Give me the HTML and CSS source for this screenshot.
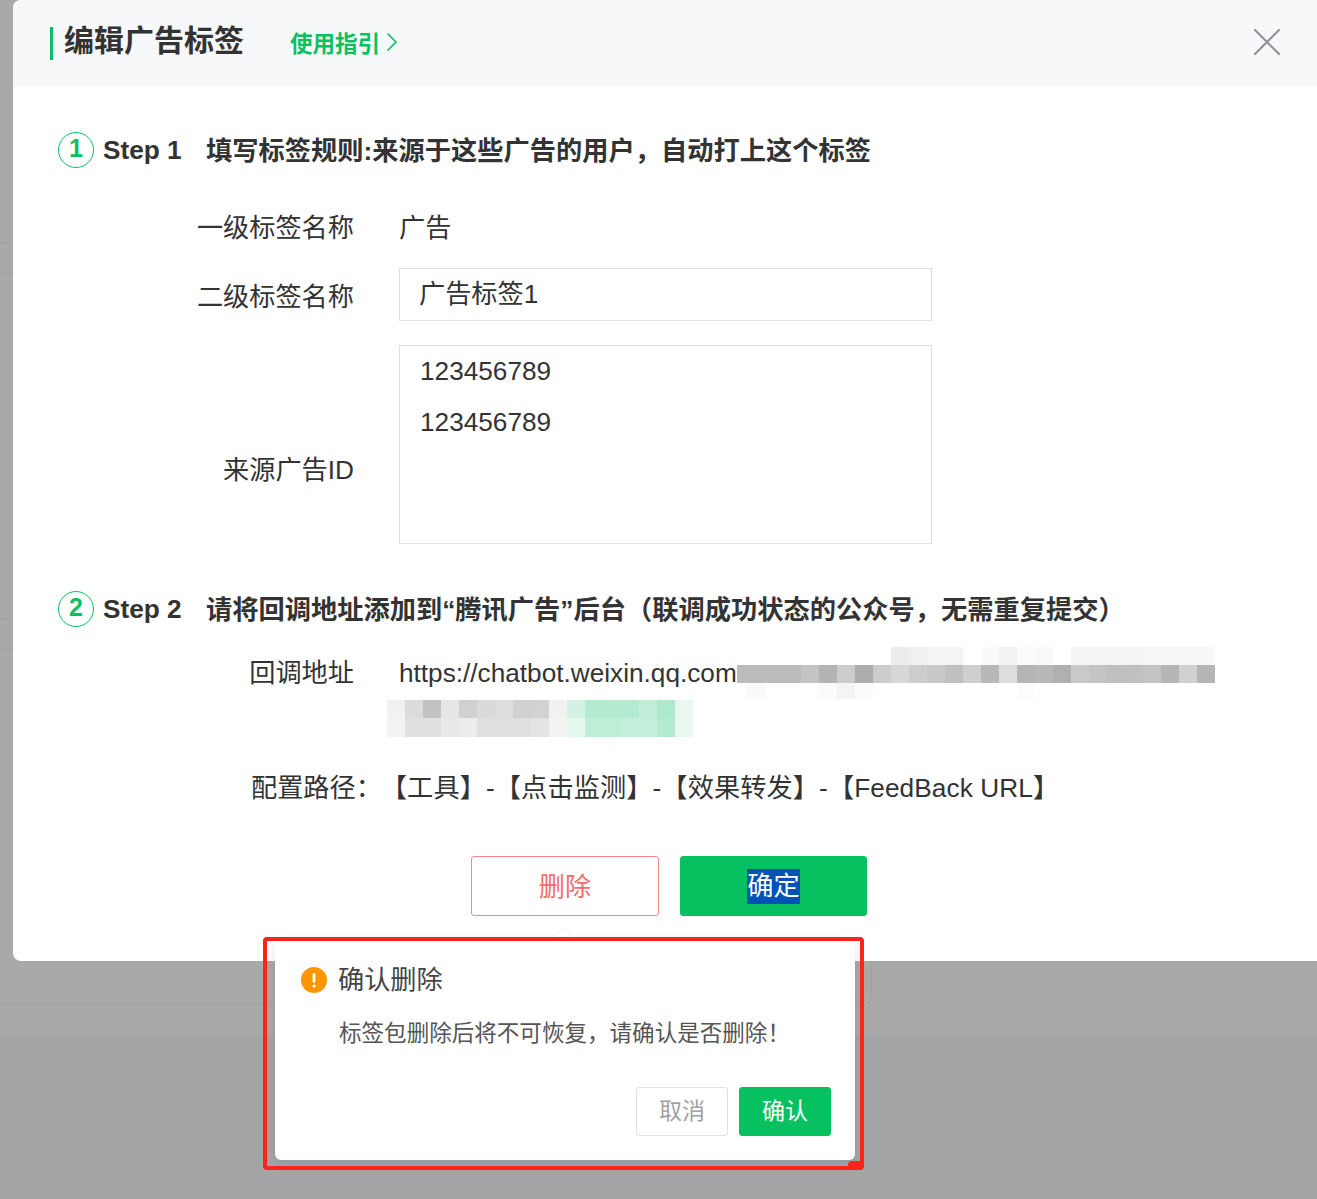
FILE: index.html
```html
<!DOCTYPE html>
<html lang="zh-CN">
<head>
<meta charset="utf-8">
<title>编辑广告标签</title>
<link rel="stylesheet" href="styles.css">
</head>
<body>
<div class="backdrop">
  <div class="bg-card">
    <div class="bg-row bg-row-a"></div>
    <div class="bg-row bg-row-b"></div>
    <div class="bg-row bg-row-c"></div>
    <div class="bg-row bg-row-b"></div>
    <div class="bg-row bg-row-d"></div>
  </div>
  <div class="bg-gap"></div>
</div>

<section class="modal">
  <header class="modal-head">
    <h1 class="modal-title">编辑广告标签</h1>
    <a class="guide">使用指引<svg class="guide-arrow" viewBox="0 0 12 20" width="12" height="20"><path d="M1.5 1.5 10 10l-8.500 8.500" fill="none" stroke="currentColor" stroke-width="1.600"/></svg></a>
    <svg class="close" viewBox="0 0 28 28" width="28" height="28"><path d="M2 2l24 24M26 2 2 26" stroke="#8f9298" stroke-width="2.200" stroke-linecap="round"/></svg>
  </header>

  <div class="modal-body">
    <div class="step step-one">
      <span class="step-num">1</span>
      <span class="step-name">Step 1</span>
      <span class="step-text">填写标签规则:来源于这些广告的用户，自动打上这个标签</span>
    </div>

    <div class="field field-plain">
      <label class="field-label">一级标签名称</label>
      <div class="field-value">广告</div>
    </div>
    <div class="field field-input">
      <label class="field-label">二级标签名称</label>
      <div class="input">广告标签1</div>
    </div>
    <div class="field field-area">
      <label class="field-label">来源广告ID</label>
      <div class="textarea"><div>123456789</div><div>123456789</div></div>
    </div>

    <div class="step step-two">
      <span class="step-num">2</span>
      <span class="step-name">Step 2</span>
      <span class="step-text">请将回调地址添加到“腾讯广告”后台（联调成功状态的公众号，无需重复提交）</span>
    </div>

    <div class="field field-url">
      <label class="field-label">回调地址</label>
      <div class="url">https://chatbot.weixin.qq.com
        <div class="mosaic mosaic-a"></div>
        <div class="mosaic mosaic-b"></div>
      </div>
    </div>

    <div class="path">配置路径：<span class="path-value">【工具】-【点击监测】-【效果转发】-【FeedBack URL】</span></div>

    <div class="actions">
      <button class="btn btn-danger">删除</button>
      <button class="btn btn-primary"><span class="selected">确定</span></button>
    </div>
  </div>
</section>

<aside class="popover">
  <div class="popover-title">
    <svg class="warn" viewBox="0 0 26 26" width="26" height="26"><circle cx="13" cy="13" r="13" fill="#ff9500"/><rect x="11.600" y="6" width="2.800" height="10" rx="1.400" fill="#fff"/><circle cx="13" cy="19" r="1.600" fill="#fff"/></svg>
    <span class="popover-heading">确认删除</span>
  </div>
  <p class="popover-text">标签包删除后将不可恢复，请确认是否删除！</p>
  <div class="popover-actions">
    <button class="mini mini-cancel">取消</button>
    <button class="mini mini-ok">确认</button>
  </div>
</aside>

<div class="red-mark"></div>
<div class="red-dot"></div>
</body>
</html>
```
FILE: styles.css
```css
* { box-sizing: border-box; }
html, body { margin: 0; padding: 0; }
body {
  position: relative;
  width: 1317px;
  height: 1199px;
  overflow: hidden;
  background: #a3a4a6;
  color: #333;
  font-family: "Liberation Sans", "Noto Sans CJK SC", sans-serif;
  font-size: 26.2px;
}

/* dimmed page behind the modal */
.backdrop { background: #a9a9a9; height: 1035px; }
.bg-card {
  width: 872px;
  height: 1005px;
  border-right: 1px solid #9e9fa1;
  border-bottom: 1px solid #9e9fa1;
  border-bottom-right-radius: 8px;
}
.bg-row { border-bottom: 1px solid #9e9fa1; }
.bg-row-a { height: 243px; }
.bg-row-b { height: 31px; }
.bg-row-c { height: 345px; }
.bg-row-d { height: 0; border-bottom: 0; }

/* modal */
.modal {
  position: absolute;
  left: 13px;
  top: 0;
  width: 1304px;
  height: 961px;
  background: #fff;
  border-radius: 8px 0 0 8px;
}
.modal-head {
  position: relative;
  display: flex;
  align-items: center;
  height: 87px;
  padding-left: 37px;
  background: #f7f8fa;
  border-top-left-radius: 8px;
}
.modal-title {
  margin: 0;
  padding-left: 11px;
  height: 33px;
  border-left: 3px solid #07c160;
  font-size: 30px;
  font-weight: 700;
  line-height: 28px;
  color: #333;
}
.guide {
  display: flex;
  align-items: center;
  margin-left: 46px;
  padding-bottom: 4px;
  font-size: 22.500px;
  font-weight: 700;
  color: #07c160;
}
.guide-arrow { margin-left: 6px; }
.close { position: absolute; right: 36px; top: 28px; }

.modal-body { padding: 45px 0 45px 45px; }

.step { display: flex; align-items: center; height: 36px; }
.step-two { margin-top: 47px; }
.step-num {
  flex: none;
  width: 36px;
  height: 36px;
  border: 1px solid #07c160;
  border-radius: 50%;
  color: #07c160;
  font-size: 25px;
  font-weight: 700;
  line-height: 31px;
  text-align: center;
}
.step-name { width: 103px; margin-left: 9px; font-weight: 700; }
.step-text { padding-bottom: 2px; font-size: 26.25px; font-weight: 700; white-space: nowrap; }

.field { display: flex; align-items: center; }
.field-label { flex: none; width: 296px; text-align: right; }
.field-plain { height: 40px; margin-top: 38px; }
.field-plain .field-value { margin-left: 45px; }
.field-input { margin-top: 22px; }
.field-area { margin-top: 24px; }
.field-area .field-label { padding-top: 46px; }
.field-input .input, .field-area .textarea, .url { margin-left: 45px; }
.input {
  width: 533px;
  height: 53px;
  padding-left: 19px;
  border: 1px solid #dcdfe6;
  line-height: 50px;
}
.textarea {
  width: 533px;
  height: 199px;
  padding: 0 20px;
  border: 1px solid #dcdfe6;
  line-height: 51px;
}
.field-url { align-items: flex-start; margin-top: 20px; height: 101px; }
.field-url .field-label { line-height: 52px; }
.url { position: relative; line-height: 52px; white-space: nowrap; }

/* pixelated redaction lying over the callback URL */
.mosaic { position: absolute; background-repeat: no-repeat; }
.mosaic-a {
  left: 338px;
  top: 0;
  width: 478px;
  height: 52px;
  background-image:
    linear-gradient(90deg, transparent 154px, #ececec 154px 172px, #f0f0f0 172px 190px, #f4f4f4 190px 226px, transparent 226px 244px, #fafafa 244px 262px, #f2f2f2 262px 280px, #fbfbfb 280px 298px, #f9f9f9 298px 316px, transparent 316px 334px, #f4f4f4 334px 406px, #f8f8f8 406px 478px),
    linear-gradient(90deg, #bbb 0 64px, #c4c4c4 64px 82px, #b4b4b4 82px 100px, #ccc 100px 118px, #acacac 118px 136px, #ccc 136px 154px, #d8d8d8 154px 172px, #cdcdcd 172px 190px, #c8c8c8 190px 208px, #bfc1c0 208px 226px, #cfcfcf 226px 244px, #b8b8b8 244px 262px, #dcdedd 262px 280px, #b5b5b5 280px 298px, #b8b8b8 298px 316px, #b0b0b0 316px 334px, #cacaca 334px 352px, #c4c4c4 352px 370px, #bec0bf 370px 388px, #c0c0c0 388px 406px, #c4c4c4 406px 424px, #b6b6b6 424px 442px, #d0d2d1 442px 460px, #b5b5b5 460px 478px),
    linear-gradient(90deg, transparent 10px, #fafafa 10px 28px, transparent 28px 82px, #fbfbfb 82px 100px, #f4f4f4 100px 118px, #fbfbfb 118px 136px, transparent 136px 280px, #fdfdfd 280px 298px, transparent 298px);
  background-size: 478px 18px, 478px 18px, 478px 16px;
  background-position: 0 0, 0 18px, 0 36px;
}
.mosaic-b {
  left: -12px;
  top: 53px;
  width: 306px;
  height: 37px;
  background-image:
    linear-gradient(90deg, #f1f1f1 0 18px, #dcdcdc 18px 36px, #c2c2c2 36px 54px, #e6e6e6 54px 72px, #d0d0d0 72px 90px, #dadada 90px 108px, #dcdedd 108px 126px, #d0d2d1 126px 144px, #d2d2d2 144px 162px, #f1f1f1 162px 180px, #d3f2e3 180px 198px, #b3ebcf 198px 216px, #b5ebd0 216px 252px, #c0eed8 252px 270px, #aee9cb 270px 288px, #e8f8f1 288px 306px),
    linear-gradient(90deg, #f3f3f3 0 18px, #dfe1e0 18px 54px, #e8e8e8 54px 72px, #ececec 72px 90px, #dfdfdf 90px 144px, #e4e4e4 144px 162px, #f3f3f3 162px 180px, #e4f8ee 180px 198px, #bdefd6 198px 234px, #c4f0db 234px 270px, #b2ebcf 270px 288px, #e9f9f2 288px 306px);
  background-size: 306px 18px, 306px 19px;
  background-position: 0 0, 0 18px;
}

.path { margin-top: 20px; padding-left: 193px; height: 40px; line-height: 40px; white-space: nowrap; }
.path-value { margin-left: 12px; letter-spacing: .1px; }

.actions { display: flex; gap: 21px; margin-top: 48px; padding-left: 413px; }
.btn {
  width: 188px;
  height: 60px;
  padding: 0;
  border-radius: 3px;
  font: inherit;
}
.btn-danger { background: #fff; border: 1px solid #f78989; color: #f56c6c; padding-bottom: 2px; }
.btn-primary { width: 187px; background: #07c160; border: 1px solid #07c160; color: #fff; }
.selected { background: #0052b4; display: inline-block; line-height: 35px; }

/* confirm popover */
.popover {
  position: absolute;
  left: 275px;
  top: 940px;
  width: 580px;
  height: 220px;
  background: #fff;
  border-radius: 6px;
  box-shadow: 0 2px 12px rgba(0, 0, 0, .1);
  padding: 25px 24px 24px 26px;
}
.popover::before {
  content: "";
  position: absolute;
  left: 281px;
  top: -8px;
  width: 14px;
  height: 14px;
  background: #fff;
  transform: rotate(45deg);
  box-shadow: -1px -1px 3px rgba(0, 0, 0, .05);
}
.popover-title { position: relative; display: flex; align-items: center; gap: 11px; height: 30px; color: #444; }
.popover-heading { padding-bottom: 4px; }
.popover-text { margin: 23px 0 0 38px; font-size: 22.55px; line-height: 32px; color: #555; white-space: nowrap; }
.popover-actions { display: flex; justify-content: flex-end; gap: 11px; margin-top: 37px; }
.mini {
  width: 92px;
  height: 49px;
  padding: 0 0 5px;
  border-radius: 3px;
  font: inherit;
  font-size: 23px;
}
.mini-cancel { background: #fff; border: 1px solid #dcdfe6; color: #a0a2a6; }
.mini-ok { background: #07c160; border: 1px solid #07c160; color: #fff; }

/* hand-drawn annotation on top of the screenshot */
.red-mark {
  position: absolute;
  left: 263px;
  top: 937px;
  width: 601px;
  height: 233px;
  border: 4px solid #f9241a;
  border-radius: 4px;
}
.red-dot {
  position: absolute;
  left: 848px;
  top: 1161px;
  width: 16px;
  height: 8px;
  background: #f9241a;
  border-radius: 4px;
}
```
